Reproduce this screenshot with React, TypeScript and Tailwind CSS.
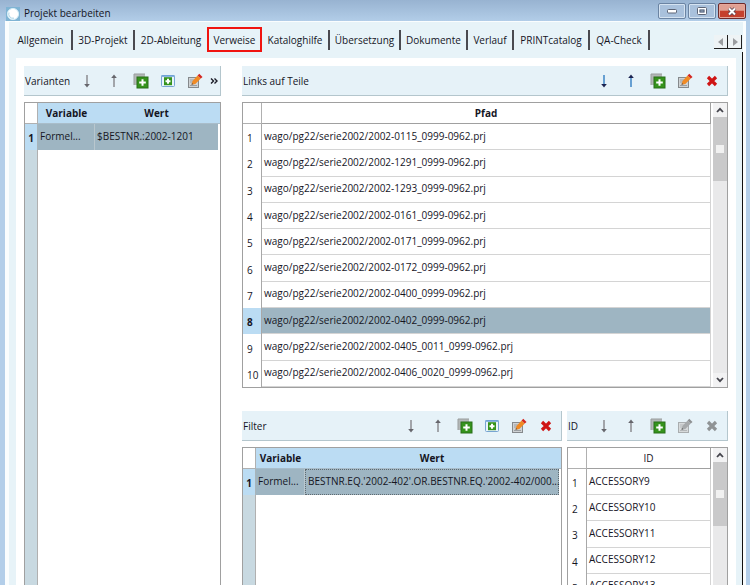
import React, { useState } from 'react'
import clsx from 'clsx'

const tabs = [
  { name: 'Allgemein', width: 'w-[63px]' },
  { name: '3D-Projekt', width: 'w-[62px]' },
  { name: '2D-Ableitung', width: 'w-[72px]' },
  { name: 'Verweise', width: 'w-[55px]' },
  { name: 'Kataloghilfe', width: 'w-[68px]' },
  { name: 'Übersetzung', width: 'w-[71px]' },
  { name: 'Dokumente', width: 'w-[67px]' },
  { name: 'Verlauf', width: 'w-[46px]' },
  { name: 'PRINTcatalog', width: 'w-[76px]' },
  { name: 'QA-Check', width: 'w-[60px]' },
]

const paths = [
  '2002-0115_0999-0962',
  '2002-1291_0999-0962',
  '2002-1293_0999-0962',
  '2002-0161_0999-0962',
  '2002-0171_0999-0962',
  '2002-0172_0999-0962',
  '2002-0400_0999-0962',
  '2002-0402_0999-0962',
  '2002-0405_0011_0999-0962',
  '2002-0406_0020_0999-0962',
]

const ids = ['ACCESSORY9', 'ACCESSORY10', 'ACCESSORY11', 'ACCESSORY12', 'ACCESSORY13']

const ArrowIcon = ({ up, active }: any) => (
  <svg width="16" height="16" viewBox="0 0 16 16" className={up ? 'rotate-180' : ''} aria-hidden="true">
    <path d="M8 2v11" stroke={active ? '#3d84c6' : '#8b8b90'} strokeWidth="1.5" />
    <path d="M5.2 11h5.6L8 14.4z" fill={active ? '#1b2350' : '#66666c'} />
  </svg>
)

const CopyAddIcon = () => (
  <svg width="16" height="16" viewBox="0 0 16 16" aria-hidden="true">
    <path d="M1 1h11v3H4v8H1z" fill="#b4b8b8" />
    <path d="M1 1h11M1 1v11" stroke="#999d9d" />
    <rect x="4" y="4" width="11" height="11" fill="#35931c" stroke="#286f18" />
    <path d="M9.5 6.2v6.6M6.2 9.5h6.6" stroke="#fff" strokeWidth="2" />
  </svg>
)

const InsertIcon = () => (
  <svg width="16" height="16" viewBox="0 0 16 16" aria-hidden="true">
    <rect x="1.5" y="2.5" width="13" height="11" rx="1" fill="#e9f4fc" stroke="#78a5d2" />
    <path d="M1.5 3h13" stroke="#6ea3d6" strokeWidth="1.6" />
    <rect x="4" y="4.2" width="8" height="8" fill="#35931c" />
    <path d="M8 5.7v5M5.5 8.2h5" stroke="#fff" strokeWidth="2" />
  </svg>
)

const EditIcon = ({ disabled }: any) => (
  <svg width="16" height="16" viewBox="0 0 16 16" aria-hidden="true">
    <rect x="1.5" y="4.5" width="10" height="10" fill={disabled ? '#d7dadb' : '#cfd2d4'} stroke={disabled ? '#a9adaf' : '#85898c'} />
    <path d="M3 7h5M3 9h3M3 12.5h7" stroke={disabled ? '#b4b7b9' : '#9a9ea1'} />
    <path d="M4.5 11.8l1-3.8L10.6 2.4l3.2 3.2-5.5 5.5z" fill={disabled ? '#a6a9ab' : '#f08a24'} />
    <path d="M10.6 2.4l1.7-1.6 3.2 3.1-1.7 1.7z" fill={disabled ? '#8e9193' : '#d32620'} />
    <path d="M4.5 11.8l.5-1.9 1.4 1.4z" fill="#555" />
  </svg>
)

const DeleteIcon = ({ disabled }: any) => (
  <svg width="16" height="16" viewBox="0 0 16 16" aria-hidden="true">
    <path d="M4 4l8 8M12 4l-8 8" stroke={disabled ? '#8f9395' : '#cf1414'} strokeWidth="3.2" />
  </svg>
)

const ToolButton = ({ label, disabled, children }: any) => (
  <button type="button" aria-label={label} disabled={disabled} className="flex h-6 w-[27px] items-center justify-center">
    {children}
  </button>
)

const Toolbar = ({ title, activeArrows, insert, remove, disabled, more }: any) => (
  <div
    className={clsx(
      'flex h-[30px] shrink-0 items-center border-r border-b border-[#b4c6cd] bg-[#e6f2f8] pl-px',
      more ? 'pr-0' : 'pr-0.5'
    )}
  >
    <h2 className="flex-1 whitespace-nowrap">{title}</h2>
    <ToolButton label="Nach unten">
      <ArrowIcon active={activeArrows} />
    </ToolButton>
    <ToolButton label="Nach oben">
      <ArrowIcon up active={activeArrows} />
    </ToolButton>
    <ToolButton label="Hinzufügen">
      <CopyAddIcon />
    </ToolButton>
    {insert && (
      <ToolButton label="Einfügen">
        <InsertIcon />
      </ToolButton>
    )}
    <ToolButton label="Bearbeiten" disabled={disabled}>
      <EditIcon disabled={disabled} />
    </ToolButton>
    {remove && (
      <ToolButton label="Löschen" disabled={disabled}>
        <DeleteIcon disabled={disabled} />
      </ToolButton>
    )}
    {more && (
      <button type="button" aria-label="Mehr" className="flex h-6 w-3 items-center justify-center">
        <svg width="8" height="8" viewBox="0 0 8 8" fill="none" stroke="#1c1c28" strokeWidth="1.4" aria-hidden="true">
          <path d="M1 1.5L3.5 4 1 6.5M4.5 1.5L7 4 4.5 6.5" />
        </svg>
      </button>
    )}
  </div>
)

const Chevron = ({ down }: any) => (
  <svg width="8" height="6" viewBox="0 0 8 6" className={down ? 'rotate-180' : ''} aria-hidden="true">
    <path d="M1 5l3-3.2L7 5" fill="none" stroke="#45454d" strokeWidth="1.8" />
  </svg>
)

const ScrollBar = ({ down }: any) => (
  <div className="ml-0.5 flex w-3.5 shrink-0 flex-col bg-[#e9e9ea]">
    <button type="button" aria-label="Aufwärts blättern" className="flex h-3.5 items-center justify-center bg-[#f2f2f3]">
      <Chevron />
    </button>
    <div className="flex h-16 items-center justify-center bg-[#c9c9ca]">
      <div className="h-2 w-2 bg-[#f1f1f1]" />
    </div>
    <div className="flex-1" />
    {down && (
      <button type="button" aria-label="Abwärts blättern" className="flex h-3.5 items-center justify-center bg-[#f2f2f3]">
        <Chevron down />
      </button>
    )}
  </div>
)

// list with a numbered first column and one data column
const ListTable = ({ heading, bold, rows, selected, height }: any) => (
  <table className={clsx('flex-1 table-fixed border-separate border-spacing-0', height)}>
    <thead>
      <tr className="h-[21px]">
        <th className="w-[19px] border-r border-b border-[#b0b0b0]" />
        <th className={clsx('border-r border-b border-[#a0a0a0] p-0', bold ? 'font-bold' : 'font-normal')}>{heading}</th>
      </tr>
    </thead>
    <tbody>
      {rows.map((row: string, i: number) => (
        <tr key={row} className={i === selected ? 'bg-[#9eb5c2]' : ''}>
          <th
            className={clsx(
              'border-r border-[#a8a8a8] p-0 pt-0.5 pl-1 text-left',
              i === selected ? 'bg-[#bbdcf3] font-bold' : 'font-normal'
            )}
          >
            {i + 1}
          </th>
          <td className="border-r border-b border-[#d4d4d4] p-0 pb-0.5 pl-0.5 whitespace-nowrap">{row}</td>
        </tr>
      ))}
    </tbody>
  </table>
)

// two-column table with a single selected row, the number column runs down to the bottom
const VariableTable = ({ variable, value, firstWidth, focused }: any) => (
  <div className="flex min-h-0 flex-1 border border-b-0 border-[#a0a0a0] bg-white">
    <table className="h-full w-full table-fixed border-separate border-spacing-0">
      <thead>
        <tr className="h-[21px]">
          <th className="w-[13px] border-r border-b border-[#b0b0b0]" />
          <th className={clsx('border-b border-[#a9bdca] bg-[#bbdcf3] p-0 font-bold', firstWidth)}>Variable</th>
          <th className="border-b border-[#a9bdca] bg-[#bbdcf3] p-0 font-bold">Wert</th>
          <th className="w-0.5 border-b border-[#a9bdca] bg-[#bbdcf3] p-0" />
        </tr>
      </thead>
      <tbody>
        <tr className="h-[26px]">
          <th className="border-r border-[#a8b4ba] bg-[#bbdcf3] p-0 pt-0.5 text-center font-bold">1</th>
          <td className="border-r border-[#b9c7ce] bg-[#9eb5c2] p-0 pb-0.5 pl-0.5 whitespace-nowrap">{variable}</td>
          <td
            className={clsx(
              'bg-[#9eb5c2] p-0 pb-0.5 pl-0.5 whitespace-nowrap',
              focused && 'border border-dotted border-[#5f6a70]'
            )}
          >
            {value}
          </td>
          <td className="p-0" />
        </tr>
        <tr>
          <td className="border-r border-[#b0b0b0] bg-[#c8d9e1] p-0" />
          <td colSpan={3} />
        </tr>
      </tbody>
    </table>
  </div>
)

const captionButton = 'flex h-4 w-7 items-center justify-center rounded-xs border border-[#6b84a3] shadow-[inset_0_0_0_1px_#d5e3f1]'

const TitleBar = () => (
  <header className="flex h-[21px] shrink-0 items-end bg-linear-to-b from-[#98b3d1] to-[#b2cde8] pl-1.5">
    <svg width="14" height="14" viewBox="0 0 14 14" aria-hidden="true">
      <rect width="14" height="14" fill="#7fb4d4" />
      <circle cx="7" cy="7" r="5.6" fill="#fff" stroke="#d6edf7" />
      <path d="M3 5.5A4.3 4.3 0 0 0 8 11.2" fill="none" stroke="#a9d4e8" />
    </svg>
    <h1 className="flex-1 pl-1 leading-4">Projekt bearbeiten</h1>
    <div className="mr-1 mb-0.5 flex gap-0.5">
      <button type="button" aria-label="Minimieren" className={clsx(captionButton, 'bg-[#a9c1dc]')}>
        <svg width="10" height="5" aria-hidden="true">
          <rect x=".5" y=".5" width="9" height="3.5" rx="1" fill="#fff" stroke="#5c6577" />
        </svg>
      </button>
      <button type="button" aria-label="Maximieren" className={clsx(captionButton, 'bg-[#a9c1dc]')}>
        <svg width="10" height="8" aria-hidden="true">
          <rect x="1.5" y="1.5" width="7" height="5" fill="#8fa8c6" stroke="#fff" strokeWidth="2" />
          <rect x=".5" y=".5" width="9" height="7" rx="1" fill="none" stroke="#5c6577" />
          <rect x="3" y="3" width="4" height="2" fill="none" stroke="#5c6577" />
        </svg>
      </button>
      <button
        type="button"
        aria-label="Schließen"
        className="flex h-4 w-7 items-center justify-center rounded-xs border border-[#6d2a2a] bg-linear-to-b from-[#e0a093] from-45% to-[#c4402d] to-50% shadow-[inset_0_0_0_1px_#e5a79b]"
      >
        <svg width="10" height="9" viewBox="0 0 10 9" aria-hidden="true">
          <path d="M2 1.5l6 6M8 1.5l-6 6" stroke="#5a4450" strokeWidth="3.6" />
          <path d="M2 1.5l6 6M8 1.5l-6 6" stroke="#fff" strokeWidth="2" />
        </svg>
      </button>
    </div>
  </header>
)

const TabStrip = ({ active, onSelect }: any) => (
  <nav className="flex h-[30px] shrink-0 items-end">
    <div className="flex h-[25px] min-w-0 items-center pl-px" role="tablist">
      {tabs.map((tab, i) => (
        <button
          key={tab.name}
          type="button"
          role="tab"
          aria-selected={i === active}
          onClick={() => onSelect(i)}
          className={clsx(
            'flex shrink-0 items-center justify-center whitespace-nowrap',
            tab.width,
            i === active ? 'h-[25px] border-2 border-[#f01410]' : 'h-5',
            i !== active && i !== active - 1 && 'border-r-2 border-[#4a4a50]'
          )}
        >
          {tab.name}
        </button>
      ))}
    </div>
    <div className="mr-px mb-[3px] ml-auto flex">
      {['M8 2v8L3 6z', 'M4 2v8l5-4z'].map((d, i) => (
        <button
          key={d}
          type="button"
          aria-label={i ? 'Weiter' : 'Zurück'}
          className="flex h-3.5 w-3.5 items-center justify-center border-r border-b border-[#202020] bg-[#eef3f5]"
        >
          <svg width="12" height="12" viewBox="0 0 12 12" aria-hidden="true">
            <path d={d} fill="#9b9da0" />
          </svg>
        </button>
      ))}
    </div>
  </nav>
)

const App = () => {
  const [active, setActive] = useState(3)

  return (
    <div className="flex h-screen flex-col overflow-hidden bg-[#b3cee9] font-['Open_Sans','Noto_Sans',sans-serif] text-[10px] leading-4 text-[#15151f]">
      <TitleBar />
      <div className="mr-1 ml-[5px] flex min-h-0 flex-1 flex-col border-t border-r-3 border-l-4 border-[#fafdfe] bg-[#e7f3f8]">
        <TabStrip active={active} onSelect={setActive} />
        <div className="flex min-h-0 flex-1 border-r border-[#111] pt-1.5 pr-1.5 pl-[7px]">
          <main className="flex min-w-0 flex-1 gap-[21px] bg-white px-2 pt-2">
            <section className="flex w-[197px] shrink-0 flex-col gap-1.5">
              <Toolbar title="Varianten" insert more />
              <VariableTable variable="Formel..." value="$BESTNR.:2002-1201" firstWidth="w-[57px]" />
            </section>
            <div className="flex min-w-0 flex-1 flex-col gap-[23px]">
              <section className="flex shrink-0 flex-col gap-1.5">
                <Toolbar title="Links auf Teile" activeArrows remove />
                <div className="flex border border-[#a0a0a0] bg-white">
                  <ListTable
                    heading="Pfad"
                    bold
                    rows={paths.map((name) => `wago/pg22/serie2002/${name}.prj`)}
                    selected={7}
                    height="h-[284px]"
                  />
                  <ScrollBar down />
                </div>
              </section>
              <div className="flex min-h-0 flex-1 gap-[5px]">
                <section className="flex min-w-0 flex-1 flex-col gap-1.5">
                  <Toolbar title="Filter" insert remove />
                  <VariableTable
                    variable="Formel..."
                    value="BESTNR.EQ.'2002-402'.OR.BESTNR.EQ.'2002-402/000..."
                    firstWidth="w-[49px]"
                    focused
                  />
                </section>
                <section className="flex w-[161px] shrink-0 flex-col gap-1.5">
                  <Toolbar title="ID" remove disabled />
                  <div className="flex min-h-0 flex-1 overflow-hidden border border-b-0 border-[#a0a0a0] bg-white">
                    <ListTable heading="ID" rows={ids} height="h-[152px]" />
                    <ScrollBar />
                  </div>
                </section>
              </div>
            </div>
          </main>
        </div>
      </div>
    </div>
  )
}

export default App
